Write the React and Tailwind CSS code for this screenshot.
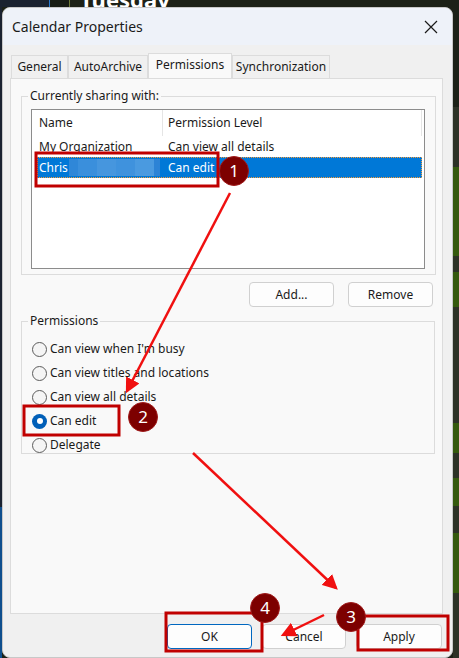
import React from 'react';

const font = { fontFamily: '"Noto Sans", "Open Sans", sans-serif' };

const bands = [
  ['h-[100px]', 'bg-[#1c2117]'],
  ['h-[60px]', 'bg-[#2d3226]'],
  ['h-[89px]', 'bg-[#365a0e]'],
  ['h-[16px]', 'bg-[#2d3226]'],
  ['h-[35px]', 'bg-[#365a0e]'],
  ['h-[116px]', 'bg-[#2d3226]'],
  ['h-[30px]', 'bg-[#365a0e]'],
  ['h-[25px]', 'bg-[#2d3226]'],
  ['h-[28px]', 'bg-[#365a0e]'],
  ['h-[27px]', 'bg-[#2d3226]'],
  ['h-[60px]', 'bg-[#365a0e]'],
  ['h-[72px]', 'bg-[#2d3226]'],
];

function Radio({ label, checked }) {
  return (
    <div className="flex items-center h-[24px]">
      <span
        className={
          checked
            ? 'w-[15px] h-[15px] rounded-full bg-[#005fb8] flex items-center justify-center'
            : 'w-[15px] h-[15px] rounded-full border border-[#5c5c5c] bg-[#f5f5f5]'
        }
      >
        {checked && <span className="w-[6px] h-[6px] rounded-full bg-white" />}
      </span>
      <span className="ml-[3px] text-[12px] text-[#1a1a1a]">{label}</span>
    </div>
  );
}

function Btn({ children, w = 'w-[85px]', focus }) {
  return (
    <div
      className={
        'h-[25px] rounded-[4px] flex items-center justify-center text-[12px] text-[#1a1a1a] bg-[#fdfdfd] ' +
        w +
        (focus ? ' border border-[#0067c0]' : ' border border-[#d0d0d0]')
      }
    >
      {children}
    </div>
  );
}

function Tab({ children, active, w }) {
  return active ? (
    <div className={'h-[26px] -mb-px bg-[#f9f9f9] border border-b-0 border-[#dcdcdc] flex items-center justify-center text-[12px] text-[#1a1a1a] pb-[3px] ' + w}>
      {children}
    </div>
  ) : (
    <div className={'h-[23px] mt-[2px] border border-b-0 border-[#dcdcdc] bg-[#f0f0f0] flex items-center justify-center text-[12px] text-[#1a1a1a] ' + w}>
      {children}
    </div>
  );
}

export default function App() {
  return (
    <div className="relative w-[459px] h-[658px] overflow-hidden bg-[#1c2117]" style={font}>
      {/* calendar behind the dialog */}
      <div className="flex h-[7px] overflow-hidden">
        <div className="w-[49px] bg-[#1a2230]" />
        <div className="w-[1px] bg-[#2a7ad0]" />
        <div className="w-[19px] bg-[#181d14]" />
        <div className="w-[1px] bg-[#6f7a3a]" />
        <div className="flex-1 bg-[#1c2117] pl-[10px]">
          <div className="text-[22px] font-bold leading-none text-white -mt-[12px]">Tuesday</div>
        </div>
      </div>
      <div className="flex">
        <div className="w-[2px] h-[651px] flex flex-col">
          <div className="h-[500px] bg-[#1a2230]" />
          <div className="flex-1 bg-[#0f4f8e]" />
        </div>

        {/* dialog */}
        <div className="w-[451px] h-[651px] rounded-[8px] overflow-hidden bg-[#f0f0f0] border border-[#c8c8c8] flex flex-col">
          <div className="h-[37px] bg-[#eef2f9] flex items-center justify-between pl-[9px] pr-[14px]">
            <span className="text-[14px] text-[#1a1a1a]">Calendar Properties</span>
            <svg width="14" height="14" viewBox="0 0 14 14">
              <path d="M1 1 L13 13 M13 1 L1 13" stroke="#1a1a1a" strokeWidth="1.2" />
            </svg>
          </div>

          <div className="pl-[7px] pr-[9px] pt-[8px] flex flex-col">
            <div className="flex items-end pl-px h-[25px]">
              <Tab w="w-[57px]">General</Tab>
              <Tab w="w-[80px]">AutoArchive</Tab>
              <Tab w="w-[84px]" active>Permissions</Tab>
              <Tab w="w-[98px]">Synchronization</Tab>
            </div>

            <div className="h-[536px] bg-[#f9f9f9] border border-[#dcdcdc] pl-[10px] pr-[7px] pt-[17px]">
              {/* sharing group */}
              <fieldset className="border border-[#dcdcdc] h-[186px] pl-[9px] pr-[10px] pt-[6px] -mt-[7px]">
                <legend className="text-[12px] text-[#1a1a1a] px-[2px] -ml-[3px] leading-[14px]">Currently sharing with:</legend>
                <div className="h-[160px] bg-white border border-[#8c8c8c] text-[12px] text-[#1a1a1a] pl-[5px] pr-[2px]">
                  <div className="flex h-[26px] items-center">
                    <div className="w-[126px] h-full flex items-center pl-[2px] border-r border-[#e5e5e5]">Name</div>
                    <div className="w-[259px] h-full flex items-center pl-[5px] border-r border-[#e5e5e5]">Permission Level</div>
                  </div>
                  <div className="flex h-[21px] items-center">
                    <div className="w-[126px] pl-[2px]">My Organization</div>
                    <div className="pl-[5px]">Can view all details</div>
                  </div>
                  <div className="flex h-[21px] items-center bg-[#0078d7] text-white border border-dotted border-[#f39c3c]">
                    <div className="w-[125px] pl-px flex items-center">
                      Chris
                      <span className="flex ml-px h-[17px]">
                        <span className="w-[9px] bg-[#2f87d8]" />
                        <span className="w-[19px] bg-[#3a8fdc]" />
                        <span className="w-[19px] bg-[#4696de]" />
                        <span className="w-[19px] bg-[#3f92dd]" />
                        <span className="w-[19px] bg-[#4a9ae0]" />
                        <span className="w-[6px] bg-[#2c83d6]" />
                      </span>
                    </div>
                    <div className="pl-[5px]">Can edit</div>
                  </div>
                </div>
              </fieldset>

              <div className="flex justify-end gap-[14px] mt-[7px] pr-[2px]">
                <Btn>Add...</Btn>
                <Btn>Remove</Btn>
              </div>

              {/* permissions group */}
              <fieldset className="border border-[#dcdcdc] h-[140px] mt-[7px] pl-[10px] pt-[9px]">
                <legend className="text-[12px] text-[#1a1a1a] px-[2px] -ml-[4px] leading-[14px]">Permissions</legend>
                <div className="flex flex-col">
                  <Radio label="Can view when I'm busy" />
                  <Radio label="Can view titles and locations" />
                  <Radio label="Can view all details" />
                  <Radio label="Can edit" checked />
                  <Radio label="Delegate" />
                </div>
              </fieldset>
            </div>

            <div className="flex justify-end gap-[10px] mt-[10px] pr-px">
              <Btn w="w-[85px]" focus>OK</Btn>
              <Btn w="w-[84px]">Cancel</Btn>
              <Btn w="w-[86px]">Apply</Btn>
            </div>
          </div>
        </div>

        <div className="w-[6px] flex flex-col">
          {bands.map(([h, c], i) => (
            <div key={i} className={h + ' ' + c} />
          ))}
        </div>
      </div>

      {/* annotations */}
      <svg className="absolute inset-0 pointer-events-none" width="459" height="658" viewBox="0 0 459 658">
        <defs>
          <marker id="ah" markerWidth="6" markerHeight="6" refX="5" refY="3" orient="auto" markerUnits="strokeWidth">
            <path d="M0 0 L6 3 L0 6 Z" fill="#f01010" />
          </marker>
        </defs>
        <g fill="none" stroke="#c00000" strokeWidth="3">
          <rect x="36" y="153" width="182" height="33" />
          <rect x="24" y="406" width="95" height="29" />
          <rect x="166" y="613" width="96" height="38" />
          <rect x="358" y="616" width="90" height="34" />
        </g>
        <g stroke="#f01010" strokeWidth="2.5" markerEnd="url(#ah)">
          <line x1="230" y1="193" x2="127" y2="391" />
          <line x1="193" y1="453" x2="336" y2="588" />
          <line x1="324" y1="615" x2="283" y2="635" />
        </g>
        {[
          [234, 171, '1'],
          [143, 417, '2'],
          [351, 617, '3'],
          [265, 608, '4'],
        ].map(([cx, cy, t]) => (
          <g key={t}>
            <circle cx={cx} cy={cy} r="14.5" fill="#7d0000" stroke="#a01a1a" strokeWidth="1" />
            <text x={cx} y={cy + 6} textAnchor="middle" fill="white" fontSize="17" style={font}>
              {t}
            </text>
          </g>
        ))}
      </svg>
    </div>
  );
}
